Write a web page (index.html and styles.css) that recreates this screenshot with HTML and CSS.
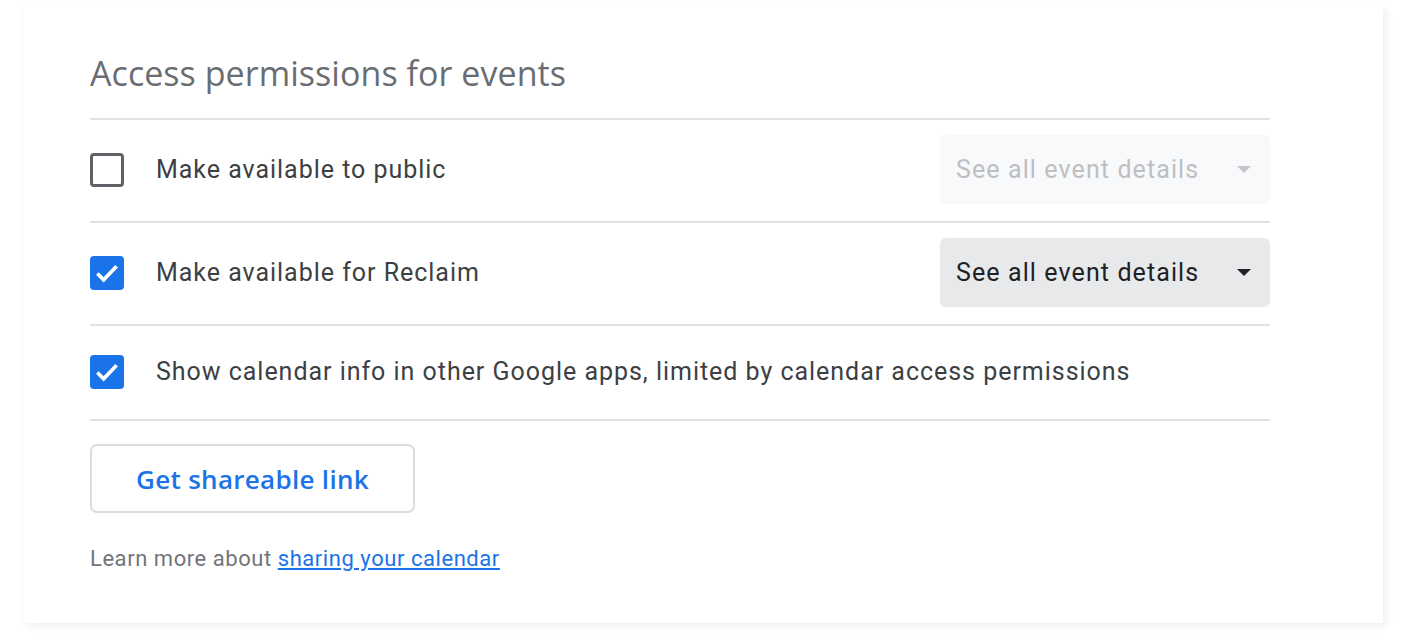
FILE: index.html
```html
<!DOCTYPE html>
<html>
<head>
<meta charset="utf-8">
<link rel="stylesheet" href="styles.css">
</head>
<body>
<div class="card">
  <h2 class="title">Access permissions for events</h2>
  <div class="row">
    <span class="cb"></span>
    <span class="label">Make available to public</span>
    <div class="select disabled"><span>See all event details</span><span class="caret"></span></div>
  </div>
  <div class="row">
    <span class="cb checked"><svg viewBox="0 0 24 24" width="34" height="34"><path d="M5.2 12.4l4.4 4.4 9.2-9.6" fill="none" stroke="#fff" stroke-width="2.6"/></svg></span>
    <span class="label">Make available for Reclaim</span>
    <div class="select"><span>See all event details</span><span class="caret"></span></div>
  </div>
  <div class="row short">
    <span class="cb checked"><svg viewBox="0 0 24 24" width="34" height="34"><path d="M5.2 12.4l4.4 4.4 9.2-9.6" fill="none" stroke="#fff" stroke-width="2.6"/></svg></span>
    <span class="label">Show calendar info in other Google apps, limited by calendar access permissions</span>
  </div>
  <div class="actions">
    <button class="btn">Get shareable link</button>
  </div>
  <p class="learn">Learn more about <a href="#">sharing your calendar</a></p>
</div>
</body>
</html>
```
FILE: styles.css
```css
html, body { margin: 0; padding: 0; background: #fff; }
body { width: 1404px; height: 640px; overflow: hidden; font-family: Roboto, "Liberation Sans", sans-serif; }
.card {
  margin: 6px 0 0 24px;
  width: 1359px;
  height: 617px;
  box-sizing: border-box;
  padding: 0 113px 0 66px;
  background: #fff;
  box-shadow: 3px 3px 8px rgba(0,0,0,0.07);
}
.title {
  margin: 0;
  padding-top: 44px;
  height: 68px;
  box-sizing: content-box;
  font-family: "Open Sans", Roboto, sans-serif;
  font-weight: 400;
  font-size: 34px;
  line-height: 46px;
  letter-spacing: 0.05px;
  color: #696d72;
  border-bottom: 2px solid #e0e1e4;
}
.row {
  display: flex;
  align-items: center;
  min-height: 69px;
  padding: 15px 0 17px;
  border-bottom: 2px solid #e0e1e4;
}
.row.short { min-height: 61px; }
.cb {
  width: 34px; height: 34px;
  box-sizing: border-box;
  border: 3px solid #5f6368;
  border-radius: 4px;
  flex: none;
  display: flex; align-items: center; justify-content: center;
}
.cb.checked { background: #1a73e8; border: none; }
.cb svg { display: block; }
.label {
  margin-left: 32px;
  flex: 1;
  font-size: 25px;
  color: #3c4043;
  letter-spacing: 0.97px;
}
.select {
  width: 330px; height: 69px;
  box-sizing: border-box;
  border-radius: 6px;
  background: #e8e9eb;
  display: flex; align-items: center; justify-content: space-between;
  padding: 0 19px 0 16px;
  font-size: 25px;
  letter-spacing: 1.1px;
  color: #202124;
}
.select.disabled { background: #f8f9fa; color: #bdbfc2; }
.caret {
  width: 0; height: 0;
  border-left: 7px solid transparent;
  border-right: 7px solid transparent;
  border-top: 7px solid #202124;
}
.select.disabled .caret { border-top-color: #c4c6c9; }
.actions { padding-top: 23px; }
.btn {
  width: 325px; height: 69px;
  background: #fff;
  border: 2px solid #dadce0;
  border-radius: 7px;
  font-family: "Open Sans", Roboto, sans-serif;
  font-weight: 600;
  font-size: 26px;
  letter-spacing: 0.3px;
  color: #1a73e8;
  padding: 0;
  cursor: pointer;
}
.learn {
  margin: 33px 0 0;
  font-size: 22px;
  letter-spacing: 0.55px;
  color: #70757a;
}
.learn a { color: #1a73e8; text-decoration: underline; }
```
